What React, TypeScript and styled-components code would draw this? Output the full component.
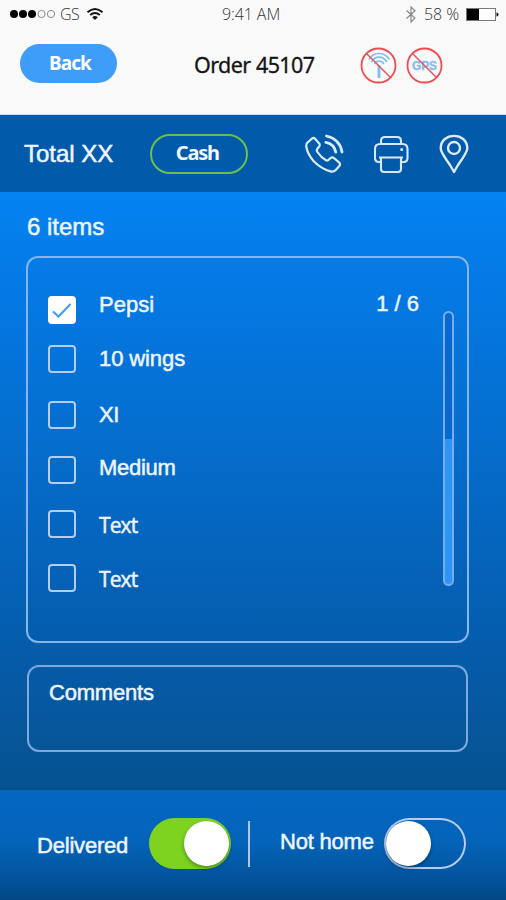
import React from "react";
import styled, { createGlobalStyle } from "styled-components";

const Global = createGlobalStyle`
  * { box-sizing: border-box; }
  body { margin: 0; background: #f9f9f9; }
`;

const arial = `"Liberation Sans", Arial, sans-serif`;
const humanist = `"Noto Sans", "Open Sans", sans-serif`;

const Screen = styled.div`
  width: 506px;
  height: 900px;
  display: flex;
  flex-direction: column;
  overflow: hidden;
  color: #eef5ff;
  font-family: ${arial};
`;

const Header = styled.header`
  height: 115px;
  background: #f9f9f9;
  border-bottom: 1px solid #c9dcf8;
`;

const StatusBar = styled.div`
  height: 28px;
  padding: 0 7px 0 9px;
  display: grid;
  grid-template-columns: 213px auto 1fr;
  align-items: center;
  font: 300 16px/28px "Open Sans", sans-serif;
  color: #333;
`;

const StatusGroup = styled.div<{ $end?: boolean }>`
  display: flex;
  align-items: center;
  gap: ${(p) => (p.$end ? 7 : 3)}px;
  justify-content: ${(p) => (p.$end ? "flex-end" : "flex-start")};
`;

const StatusText = styled.span<{ $spacing?: number }>`
  letter-spacing: ${(p) => p.$spacing ?? 0}px;
  white-space: nowrap;
`;

const TitleBar = styled.div`
  height: 86px;
  padding: 16px 0 0 20px;
  display: flex;
  align-items: flex-start;
`;

const BackButton = styled.button`
  width: 97px;
  height: 39px;
  padding: 0 0 0 3px;
  border: 0;
  border-radius: 20px;
  background: #3f9dfa;
  color: #fff;
  font: 700 19px/39px ${humanist};
  letter-spacing: -0.9px;
`;

const Title = styled.h1`
  width: 122px;
  margin: 4px 0 0 77px;
  font: 400 21.5px/34px ${humanist};
  letter-spacing: -0.6px;
  word-spacing: 0.5px;
  color: #151515;
  -webkit-text-stroke: 0.3px #151515;
  white-space: nowrap;
`;

const Alerts = styled.div`
  display: flex;
  gap: 9px;
  margin: 3px 0 0 44px;
`;

const Toolbar = styled.div`
  height: 77px;
  padding: 0 37px 0 24px;
  display: flex;
  align-items: center;
  background: #025aab;
`;

const Label = styled.span<{ $size?: number; $shift?: number; $spacing?: number; $font?: string }>`
  font-family: ${(p) => p.$font ?? arial};
  font-size: ${(p) => p.$size ?? 22}px;
  line-height: 28px;
  letter-spacing: ${(p) => p.$spacing ?? 0}px;
  margin-top: ${(p) => p.$shift ?? 0}px;
  -webkit-text-stroke: 0.5px currentColor;
  white-space: nowrap;
`;

const CashButton = styled.button`
  width: 98px;
  height: 40px;
  margin-left: 37px;
  padding: 0 4px 2px 0;
  border: 2px solid #6cbf4b;
  border-radius: 20px;
  background: transparent;
  color: #f1f6ff;
  font: 700 20px/34px ${humanist};
  letter-spacing: -1.2px;
`;

const Tools = styled.div`
  display: flex;
  align-items: center;
  margin-left: auto;
  gap: 29px;
`;

const Main = styled.main`
  height: 598px;
  padding: 21px 37px 0 27px;
  display: flex;
  flex-direction: column;
  background: linear-gradient(#0583f2 0, #047ae6 14%, #056dcd 42%, #055eb0 72%, #06528f 100%);
`;

const Panel = styled.section`
  width: 443px;
  height: 387px;
  margin: 15px 0 0 -1px;
  padding: 38px 13px 0 20px;
  display: flex;
  border: 2px solid #85b6ef;
  border-radius: 12px;
`;

const Items = styled.div`
  flex: 1;
`;

const Item = styled.div<{ $height: number }>`
  height: ${(p) => p.$height}px;
  display: flex;
  align-items: flex-start;
`;

const Check = styled.div<{ $on?: boolean }>`
  width: 28px;
  height: 28px;
  margin-right: 23px;
  flex: none;
  border: 2px solid ${(p) => (p.$on ? "#fff" : "#b3cdf3")};
  border-radius: 4px;
  background: ${(p) => (p.$on ? "#fff" : "transparent")};
`;

const Count = styled(Label)`
  margin-left: auto;
  margin-right: 24px;
`;

const Scroll = styled.div`
  width: 11px;
  height: 275px;
  margin-top: 15px;
  border: 2px solid #75adf0;
  border-radius: 6px;
  background: linear-gradient(#0868d0 0 126px, #2b96f8 126px);
`;

const Comments = styled.section`
  width: 441px;
  height: 87px;
  margin-top: 22px;
  padding: 12px 20px;
  border: 2px solid #7ea9dc;
  border-radius: 12px;
`;

const Footer = styled.footer`
  height: 110px;
  padding: 28px 0 0 37px;
  display: flex;
  align-items: flex-start;
  background: linear-gradient(#0566c2 0, #0464ba 45%, #035198 85%, #034785 100%);
`;

const Toggle = styled.div<{ $on?: boolean }>`
  width: 82px;
  height: 51px;
  padding: 2px;
  display: flex;
  justify-content: ${(p) => (p.$on ? "flex-end" : "flex-start")};
  align-items: center;
  border-radius: 26px;
  background: ${(p) => (p.$on ? "#7ed321" : "transparent")};
  box-shadow: ${(p) => (p.$on ? "none" : "inset 0 0 0 2px #b5cdee")};
`;

const Knob = styled.div`
  width: 45px;
  height: 45px;
  border-radius: 50%;
  background: #fff;
  box-shadow: 0 2px 4px rgba(0, 0, 0, 0.35);
`;

const Divider = styled.div`
  width: 2px;
  height: 46px;
  margin: 3px 30px 0 17px;
  background: #a9c8ef;
`;

const FooterText = styled(Label)<{ $width: number }>`
  width: ${(p) => p.$width}px;
`;

const rows = [
  { text: "Pepsi", height: 48.5, shift: -5, checked: true, count: "1 / 6" },
  { text: "10 wings", height: 56.5, shift: 0, spacing: -0.1 },
  { text: "XI", height: 55, shift: 0, spacing: -0.4 },
  { text: "Medium", height: 54, shift: -2, spacing: -0.3 },
  { text: "Text", height: 54, shift: 1, size: 21, font: `"Open Sans", sans-serif`, spacing: -0.9 },
  { text: "Text", height: 54, shift: 1, size: 21, font: `"Open Sans", sans-serif`, spacing: -0.9 },
];

const Signal = () => (
  <svg width="48" height="10" viewBox="0 0 48 10">
    {[5, 14, 23].map((x) => <circle key={x} cx={x} cy="5" r="4" fill="#000" />)}
    {[32.5, 42].map((x) => <circle key={x} cx={x} cy="5" r="3.6" fill="none" stroke="#888" />)}
  </svg>
);

const Wifi = () => (
  <svg width="22" height="14" viewBox="-4 0 22 14" fill="none" stroke="#111" strokeWidth="2">
    <path d="M1.5 5.2Q9-1.3 16.5 5.2M4.2 8Q9 4 13.8 8" />
    <path d="M6.2 10.2Q9 8 11.8 10.2L9 13Z" fill="#111" stroke="none" />
  </svg>
);

const Bluetooth = () => (
  <svg width="12" height="17" viewBox="0 0 12 17" fill="none" stroke="#888" strokeWidth="1.2">
    <path d="M1.5 4.5L10 12 6 16V1L10 4.8 1.5 12.5" />
  </svg>
);

const Battery = () => (
  <svg width="33" height="13" viewBox="0 0 33 13">
    <rect x=".5" y=".5" width="29" height="12" fill="#fff" stroke="#777" />
    <rect x="1" y="1" width="12" height="11" fill="#000" />
    <path d="M30.5 4.5Q32.5 4.5 32.5 6.5T30.5 8.5Z" fill="#111" />
  </svg>
);

const NoSignal = () => (
  <svg width="37" height="37" viewBox="0 0 37 37" fill="none">
    <g stroke="#82bdf1" strokeWidth="1.7">
      <path d="M9 12.5C13.5 4.5 24.5 4.5 29.5 12.5M11.5 15C15 8.5 23 8.5 27 15M14.5 17C16.5 13 21.5 13 24 17" />
      <path d="M19 18V31" strokeWidth="2.8" />
    </g>
    <circle cx="18.5" cy="18.5" r="17" stroke="#ef4b50" strokeWidth="1.8" />
    <path d="M6.5 6.5L30.5 30.5" stroke="#e5505a" strokeWidth="1.5" />
  </svg>
);

const NoGps = () => (
  <svg width="37" height="37" viewBox="0 0 37 37" fill="none">
    <text x="18.5" y="23.3" textAnchor="middle" textLength="25" lengthAdjust="spacingAndGlyphs" fontFamily="Liberation Sans" fontWeight="700" fontSize="13" fill="#86bdf2" stroke="#86bdf2" strokeWidth=".4">GPS</text>
    <circle cx="18.5" cy="18.5" r="17" stroke="#ef4b50" strokeWidth="1.8" />
    <path d="M6.5 6.5L30.5 30.5" stroke="#e5505a" strokeWidth="1.5" />
  </svg>
);

const Phone = () => (
  <svg width="40" height="40" viewBox="0 0 40 40" fill="none" stroke="#dceaff" strokeWidth="2.2" strokeLinejoin="round" strokeLinecap="round">
    <path d="M7.2 4.4Q8.5 3.4 9.8 4.6L14.2 9.4Q15.3 11 14.2 12.5L12.2 15Q11.4 16.3 12.4 18 16 23.5 21 26.2 22.5 27 23.8 25.7L25.8 23.8Q27.3 22.8 28.9 24L34 28.4Q35.8 30 34.3 32L31 35.7Q28.5 38.2 25.5 37.4 16 34.8 8.5 27 2.5 20 1.3 12.8 1 10.3 2.3 8.8Z" />
    <path d="M20.8 8.3Q29 9.7 30.8 18.2M21.5 2Q34.8 5 37 18" strokeWidth="2.8" />
  </svg>
);

const Printer = () => (
  <svg width="36" height="38" viewBox="0 0 36 38" fill="none" stroke="#d9e8ff" strokeWidth="2.1" strokeLinejoin="round">
    <path d="M7 9V6Q7 2 11 2H23Q27 2 27 6V9M7 27H5Q1 27 1 23V14Q1 9 6 9H28.5Q33.5 9 33.5 14V23Q33.5 27 29.5 27H27M5 22.5H29M7 22.5V34Q7 37 10 37H24Q27 37 27 34V22.5" />
    <circle cx="27.7" cy="14.5" r="1.5" fill="#d9e8ff" stroke="none" />
  </svg>
);

const Pin = () => (
  <svg width="30" height="40" viewBox="0 0 30 40" fill="none" stroke="#dceaff" strokeWidth="2.4" strokeLinejoin="round">
    <path d="M15 38L11 31Q1.7 18 1.7 14.5C1.7-2.4 28.3-2.4 28.3 14.5Q28.3 18 19 31Z" />
    <circle cx="15" cy="14" r="6" />
  </svg>
);

const Tick = () => (
  <svg width="24" height="24" viewBox="0 0 24 24" fill="none" stroke="#3d9df5" strokeWidth="2">
    <path d="M3 13.5L8.5 18.5 20.5 6" />
  </svg>
);

export default function App() {
  return (
    <Screen>
      <Global />
      <Header>
        <StatusBar>
          <StatusGroup>
            <Signal />
            <StatusText $spacing={-0.5}>GS</StatusText>
            <Wifi />
          </StatusGroup>
          <StatusText $spacing={-0.1}>9:41 AM</StatusText>
          <StatusGroup $end>
            <Bluetooth />
            <StatusText $spacing={-0.1}>58 %</StatusText>
            <Battery />
          </StatusGroup>
        </StatusBar>
        <TitleBar>
          <BackButton>Back</BackButton>
          <Title>Order 45107</Title>
          <Alerts>
            <NoSignal />
            <NoGps />
          </Alerts>
        </TitleBar>
      </Header>
      <Toolbar>
        <Label $size={24}>Total XX</Label>
        <CashButton>Cash</CashButton>
        <Tools>
          <Phone />
          <Printer />
          <Pin />
        </Tools>
      </Toolbar>
      <Main>
        <Label $size={24}>6 items</Label>
        <Panel>
          <Items>
            {rows.map((row, i) => (
              <Item key={i} $height={row.height}>
                <Check $on={row.checked}>{row.checked && <Tick />}</Check>
                <Label $shift={row.shift} $size={row.size} $font={row.font} $spacing={row.spacing}>{row.text}</Label>
                {row.count && <Count $shift={-6}>{row.count}</Count>}
              </Item>
            ))}
          </Items>
          <Scroll />
        </Panel>
        <Comments>
          <Label $size={22} $spacing={-0.2}>Comments</Label>
        </Comments>
      </Main>
      <Footer>
        <FooterText $width={112} $shift={14} $spacing={-0.2}>Delivered</FooterText>
        <Toggle $on><Knob /></Toggle>
        <Divider />
        <FooterText $width={104} $shift={10} $spacing={-0.2}>Not home</FooterText>
        <Toggle><Knob /></Toggle>
      </Footer>
    </Screen>
  );
}
